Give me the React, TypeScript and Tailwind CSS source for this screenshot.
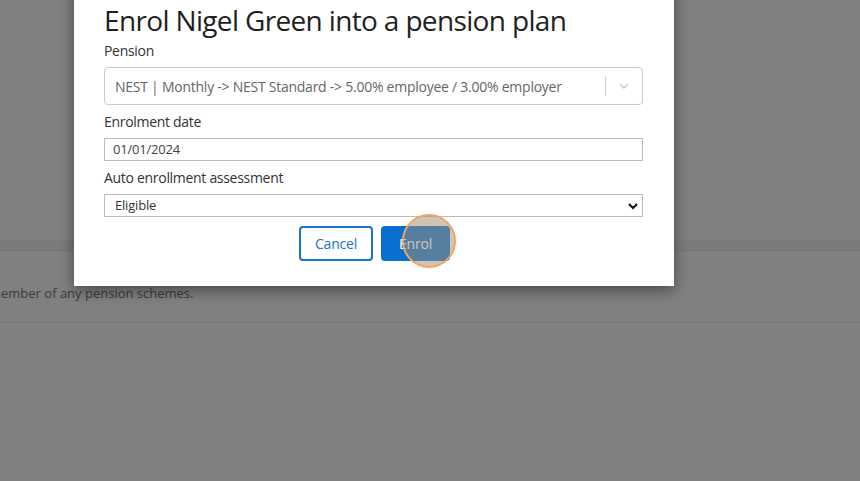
import React from "react";

export default function App() {
  return (
    <div className="relative h-[481px] w-[860px] overflow-hidden bg-[#808080] font-['Open_Sans',sans-serif]">
      {/* background page (dimmed) */}
      <div className="flex h-full flex-col">
        <div className="h-[240px] shrink-0" />
        <div className="h-[10px] shrink-0 border-t border-[#7a7a7a] bg-[#7b7b7b]" />
        <div className="flex h-[73px] shrink-0 items-center border-y border-[#777777] bg-[#808080]">
          <span className="-ml-[11px] mt-[14px] whitespace-nowrap text-[13px] text-[#3a3a3a]">
            member of any pension schemes.
          </span>
        </div>
        <div className="flex-1 border-t border-[#838383]" />
      </div>

      {/* modal */}
      <div className="absolute left-[74px] top-[-20px] h-[306px] w-[600px] bg-white pl-[30px] pr-[31px] pt-[20px] shadow-[0_4px_14px_rgba(0,0,0,0.45)]">
        <h1 className="mt-[1px] text-[28px] leading-[38px] tracking-[-0.65px] text-[#1f1f1f]">
          Enrol Nigel Green into a pension plan
        </h1>
        <div className="mt-[2px] text-[14px] leading-[20px] tracking-[-0.3px] text-[#333]">Pension</div>
        <div className="mt-[6px] flex h-[38px] items-center rounded-[4px] border border-[#cccccc] pl-[10px]">
          <span className="flex-1 truncate text-[14px] tracking-[-0.25px] text-[#666]">
            NEST | Monthly -&gt; NEST Standard -&gt; 5.00% employee / 3.00% employer
          </span>
          <div className="h-[20px] w-px bg-[#cccccc]" />
          <div className="flex w-[36px] items-center justify-center">
            <svg width="14" height="14" viewBox="0 0 20 20" fill="#cccccc">
              <path d="M4.516 7.548c0.436-0.446 1.043-0.481 1.576 0l3.908 3.747 3.908-3.747c0.533-0.481 1.141-0.446 1.574 0 0.436 0.445 0.408 1.197 0 1.615-0.406 0.418-4.695 4.502-4.695 4.502-0.217 0.223-0.502 0.335-0.787 0.335s-0.570-0.112-0.789-0.335c0 0-4.287-4.084-4.695-4.502s-0.436-1.17 0-1.615z" />
            </svg>
          </div>
        </div>
        <div className="mt-[7px] text-[14px] leading-[20px] tracking-[-0.3px] text-[#333]">Enrolment date</div>
        <div className="mt-[6px] flex h-[23px] items-center border border-[#bdbdbd] pl-[8px] text-[13px] tracking-[-0.2px] text-[#444]">
          01/01/2024
        </div>
        <div className="mt-[7px] text-[14px] leading-[20px] tracking-[-0.3px] text-[#333]">Auto enrollment assessment</div>
        <div className="mt-[6px] flex h-[23px] items-center justify-between border border-[#bdbdbd] pl-[10px] pr-[4px] text-[13px] tracking-[-0.2px] text-[#333]">
          <span>Eligible</span>
          <svg width="10" height="8" viewBox="0 0 10 8">
            <path d="M1 2 L5 6 L9 2" stroke="#111" strokeWidth="2" fill="none" />
          </svg>
        </div>
        <div className="mt-[9px] flex justify-center gap-[8px] pl-[2px]">
          <button className="h-[35px] w-[74px] rounded-[4px] border-2 border-[#1a73c8] text-[14px] tracking-[-0.2px] text-[#1a73c8]">
            Cancel
          </button>
          <button className="h-[35px] w-[69px] rounded-[4px] bg-[#0a70d0] text-[14px] tracking-[-0.2px] text-white">
            Enrol
          </button>
        </div>
      </div>

      {/* click highlight */}
      <div className="absolute left-[402px] top-[214px] h-[54px] w-[54px] rounded-full border-2 border-[#f4a462] bg-[rgba(160,140,110,0.5)]" />
    </div>
  );
}
